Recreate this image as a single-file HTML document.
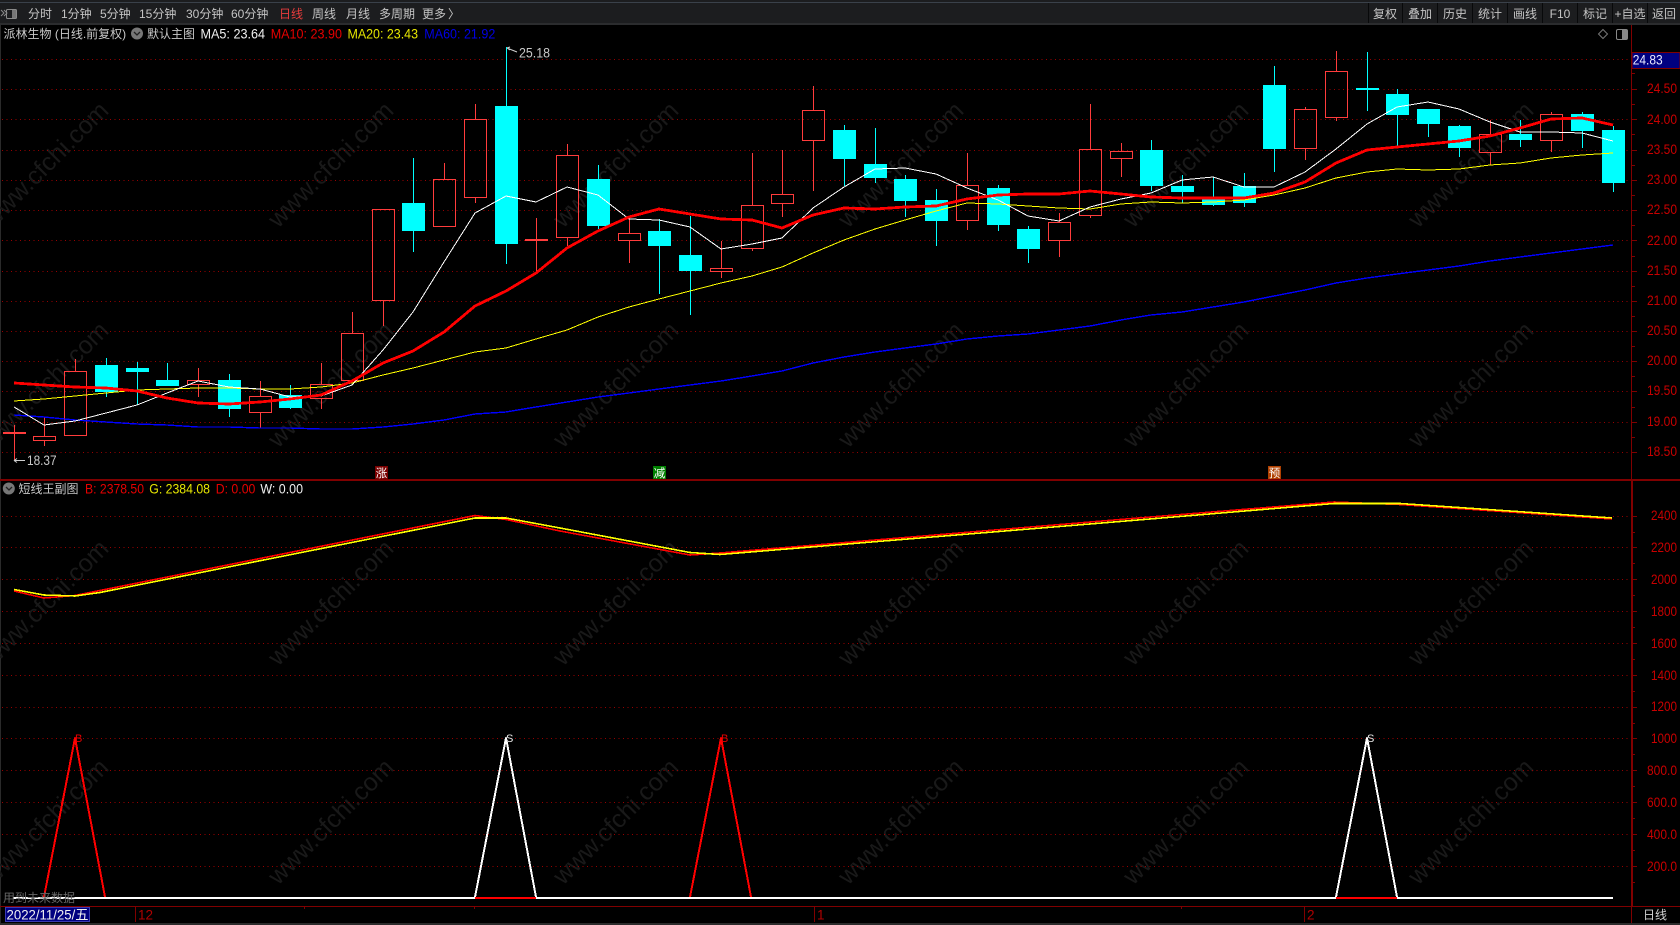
<!DOCTYPE html>
<html><head><meta charset="utf-8"><title>派林生物</title>
<style>
html,body{margin:0;padding:0;background:#000;width:1680px;height:925px;overflow:hidden}
svg{display:block}
text{font-family:"Liberation Sans","Noto Sans CJK SC",sans-serif;font-size:12px}
.tb text{fill:#c4c4c4}
.ax text{fill:#c80000;text-anchor:end;font-size:13.5px}
.wm text{font-size:25px;fill:#191919;text-anchor:end}
.lg text{font-size:13.5px}
</style></head><body>
<svg width="1680" height="925" viewBox="0 0 1680 925" xmlns="http://www.w3.org/2000/svg">
<rect width="1680" height="925" fill="#000"/>
<!-- toolbar -->
<rect width="1680" height="24" fill="#1c1d1f"/>
<rect y="2" width="1680" height="1" fill="#3a414a"/>
<rect y="23" width="1680" height="2" fill="#2b2c2e"/>
<rect x="0" y="25" width="1" height="898" fill="#2a2a2a"/>
<g fill="none" stroke="#8a8a8a"><path d="M1 10l3 3-3 3M4 10l3 3-3 3" /><rect x="6.500" y="9.500" width="10" height="9" rx="1"/></g><rect x="12" y="10" width="4" height="8" fill="#777"/>
<g class="tb">
<text x="28" y="18">分时</text><text x="61" y="18">1分钟</text><text x="100" y="18">5分钟</text><text x="139" y="18">15分钟</text><text x="186" y="18">30分钟</text><text x="231" y="18">60分钟</text>
<text x="279" y="18" style="fill:#e83c3c">日线</text><text x="312" y="18">周线</text><text x="346" y="18">月线</text><text x="379" y="18">多周期</text><text x="422" y="18">更多</text><text x="448" y="18">〉</text>
<g text-anchor="middle"><text x="1385" y="18">复权</text><text x="1420" y="18">叠加</text><text x="1455" y="18">历史</text><text x="1490" y="18">统计</text><text x="1525" y="18">画线</text><text x="1560" y="18">F10</text><text x="1595" y="18">标记</text><text x="1630" y="18">+自选</text><text x="1664" y="18">返回</text></g>
</g>
<path d="M1368.500 3V23M1402.500 3V23M1437.500 3V23M1472.500 3V23M1507.500 3V23M1542.500 3V23M1577.500 3V23M1612.500 3V23M1647.500 3V23" stroke="#08090a" fill="none"/>
<!-- watermark -->
<g class="wm">
<text transform="translate(110,112) rotate(-45)">www.cfchi.com</text><text transform="translate(395,112) rotate(-45)">www.cfchi.com</text><text transform="translate(680,112) rotate(-45)">www.cfchi.com</text><text transform="translate(965,112) rotate(-45)">www.cfchi.com</text><text transform="translate(1250,112) rotate(-45)">www.cfchi.com</text><text transform="translate(1535,112) rotate(-45)">www.cfchi.com</text>
<text transform="translate(110,332) rotate(-45)">www.cfchi.com</text><text transform="translate(395,332) rotate(-45)">www.cfchi.com</text><text transform="translate(680,332) rotate(-45)">www.cfchi.com</text><text transform="translate(965,332) rotate(-45)">www.cfchi.com</text><text transform="translate(1250,332) rotate(-45)">www.cfchi.com</text><text transform="translate(1535,332) rotate(-45)">www.cfchi.com</text>
<text transform="translate(110,550) rotate(-45)">www.cfchi.com</text><text transform="translate(395,550) rotate(-45)">www.cfchi.com</text><text transform="translate(680,550) rotate(-45)">www.cfchi.com</text><text transform="translate(965,550) rotate(-45)">www.cfchi.com</text><text transform="translate(1250,550) rotate(-45)">www.cfchi.com</text><text transform="translate(1535,550) rotate(-45)">www.cfchi.com</text>
<text transform="translate(110,769) rotate(-45)">www.cfchi.com</text><text transform="translate(395,769) rotate(-45)">www.cfchi.com</text><text transform="translate(680,769) rotate(-45)">www.cfchi.com</text><text transform="translate(965,769) rotate(-45)">www.cfchi.com</text><text transform="translate(1250,769) rotate(-45)">www.cfchi.com</text><text transform="translate(1535,769) rotate(-45)">www.cfchi.com</text>
</g>
<!-- grid -->
<path stroke="#980000" stroke-dasharray="1 3.500" fill="none" shape-rendering="crispEdges" d="M2 59.500H1631M2 89.500H1631M2 119.500H1631M2 150.500H1631M2 180.500H1631M2 210.500H1631M2 240.500H1631M2 271.500H1631M2 301.500H1631M2 331.500H1631M2 361.500H1631M2 391.500H1631M2 422.500H1631M2 452.500H1631M2 516.500H1631M2 547.500H1631M2 579.500H1631M2 611.500H1631M2 643.500H1631M2 675.500H1631M2 707.500H1631M2 738.500H1631M2 770.500H1631M2 802.500H1631M2 834.500H1631M2 866.500H1631"/>
<!-- axis + separators -->
<rect y="479" width="1680" height="2" fill="#800000"/>
<path stroke="#800000" fill="none" shape-rendering="crispEdges" d="M0 906.500H1680M1631.500 25V923M1632.500 481V906M1632 89.500H1637M1632 119.500H1637M1632 150.500H1637M1632 180.500H1637M1632 210.500H1637M1632 240.500H1637M1632 271.500H1637M1632 301.500H1637M1632 331.500H1637M1632 361.500H1637M1632 391.500H1637M1632 422.500H1637M1632 452.500H1637M1632 73.500H1635M1632 104.500H1635M1632 134.500H1635M1632 165.500H1635M1632 195.500H1635M1632 225.500H1635M1632 256.500H1635M1632 286.500H1635M1632 316.500H1635M1632 346.500H1635M1632 376.500H1635M1632 407.500H1635M1632 437.500H1635M1632 516.500H1637M1632 547.500H1637M1632 579.500H1637M1632 611.500H1637M1632 643.500H1637M1632 675.500H1637M1632 707.500H1637M1632 738.500H1637M1632 770.500H1637M1632 802.500H1637M1632 834.500H1637M1632 866.500H1637M1632 532.500H1635M1632 563.500H1635M1632 595.500H1635M1632 627.500H1635M1632 659.500H1635M1632 691.500H1635M1632 723.500H1635M1632 754.500H1635M1632 786.500H1635M1632 818.500H1635M1632 850.500H1635M1632 882.500H1635"/>
<g class="ax">
<text x="1677" y="93" textLength="30" lengthAdjust="spacingAndGlyphs">24.50</text><text x="1677" y="124" textLength="30" lengthAdjust="spacingAndGlyphs">24.00</text><text x="1677" y="154" textLength="30" lengthAdjust="spacingAndGlyphs">23.50</text><text x="1677" y="184" textLength="30" lengthAdjust="spacingAndGlyphs">23.00</text><text x="1677" y="214" textLength="30" lengthAdjust="spacingAndGlyphs">22.50</text><text x="1677" y="245" textLength="30" lengthAdjust="spacingAndGlyphs">22.00</text><text x="1677" y="275" textLength="30" lengthAdjust="spacingAndGlyphs">21.50</text><text x="1677" y="305" textLength="30" lengthAdjust="spacingAndGlyphs">21.00</text><text x="1677" y="335" textLength="30" lengthAdjust="spacingAndGlyphs">20.50</text><text x="1677" y="365" textLength="30" lengthAdjust="spacingAndGlyphs">20.00</text><text x="1677" y="395" textLength="30" lengthAdjust="spacingAndGlyphs">19.50</text><text x="1677" y="426" textLength="30" lengthAdjust="spacingAndGlyphs">19.00</text><text x="1677" y="456" textLength="30" lengthAdjust="spacingAndGlyphs">18.50</text>
<text x="1677" y="520" textLength="26" lengthAdjust="spacingAndGlyphs">2400</text><text x="1677" y="552" textLength="26" lengthAdjust="spacingAndGlyphs">2200</text><text x="1677" y="584" textLength="26" lengthAdjust="spacingAndGlyphs">2000</text><text x="1677" y="616" textLength="26" lengthAdjust="spacingAndGlyphs">1800</text><text x="1677" y="648" textLength="26" lengthAdjust="spacingAndGlyphs">1600</text><text x="1677" y="680" textLength="26" lengthAdjust="spacingAndGlyphs">1400</text><text x="1677" y="711" textLength="26" lengthAdjust="spacingAndGlyphs">1200</text><text x="1677" y="743" textLength="26" lengthAdjust="spacingAndGlyphs">1000</text><text x="1677" y="775" textLength="30" lengthAdjust="spacingAndGlyphs">800.0</text><text x="1677" y="807" textLength="30" lengthAdjust="spacingAndGlyphs">600.0</text><text x="1677" y="839" textLength="30" lengthAdjust="spacingAndGlyphs">400.0</text><text x="1677" y="871" textLength="30" lengthAdjust="spacingAndGlyphs">200.0</text>
</g>
<rect x="1632" y="52.500" width="48" height="16" fill="#000080" stroke="#800000"/>
<text x="1632.700" y="64.500" fill="#e8e8ff" style="font-size:13.500px" textLength="30" lengthAdjust="spacingAndGlyphs">24.83</text>
<!-- legend -->
<g fill="none"><path d="M1603 29.500l4.500 4.500-4.500 4.500-4.500-4.500z" stroke="#777"/><rect x="1616.500" y="29.500" width="11" height="10" rx="1.500" stroke="#888"/></g><rect x="1622" y="30" width="5" height="9" fill="#888"/>
<text x="3.500" y="38" fill="#c8c8c8">派林生物 (日线.前复权)</text>
<circle cx="137" cy="33.500" r="6" fill="#777"/><path d="M134 32l3 3 3-3" stroke="#222" fill="none" stroke-width="1.300"/>
<text x="147" y="38" fill="#c8c8c8">默认主图</text>
<g class="lg"><text x="200.500" y="38.300" fill="#f0f0f0" textLength="64.500" lengthAdjust="spacingAndGlyphs">MA5: 23.64</text><text x="270.700" y="38.300" fill="#e60000" textLength="71.300" lengthAdjust="spacingAndGlyphs">MA10: 23.90</text><text x="347.500" y="38.300" fill="#e6e600" textLength="70.500" lengthAdjust="spacingAndGlyphs">MA20: 23.43</text><text x="424.300" y="38.300" fill="#0000e6" textLength="71" lengthAdjust="spacingAndGlyphs">MA60: 21.92</text></g>
<circle cx="8.800" cy="488.500" r="6" fill="#777"/><path d="M6 487l3 3 3-3" stroke="#222" fill="none" stroke-width="1.300"/>
<text x="18.500" y="493" fill="#c8c8c8">短线王副图</text>
<g class="lg"><text x="85" y="493.500" fill="#e60000" textLength="59" lengthAdjust="spacingAndGlyphs">B: 2378.50</text><text x="149.300" y="493.500" fill="#e6e600" textLength="60.700" lengthAdjust="spacingAndGlyphs">G: 2384.08</text><text x="215.700" y="493.500" fill="#e60000" textLength="39.700" lengthAdjust="spacingAndGlyphs">D: 0.00</text><text x="260.400" y="493.500" fill="#f0f0f0" textLength="42.600" lengthAdjust="spacingAndGlyphs">W: 0.00</text></g>
<!-- candles -->
<g shape-rendering="crispEdges">
<path fill="#00ffff" d="M95 365H118V392H95ZM126 368H149V372H126ZM156 380H179V386H156ZM218 380H241V409H218ZM279 395H302V408H279ZM402 203H425V231H402ZM495 106H518V244H495ZM587 179H610V226H587ZM648 231H671V246H648ZM679 255H702V271H679ZM833 130H856V159H833ZM864 164H887V178H864ZM894 179H917V201H894ZM925 200H948V221H925ZM987 188H1010V225H987ZM1017 229H1040V249H1017ZM1140 150H1163V186H1140ZM1171 186H1194V192H1171ZM1202 199H1225V205H1202ZM1233 186H1256V203H1233ZM1263 85H1286V149H1263ZM1356 88H1379V90H1356ZM1386 94H1409V115H1386ZM1417 109H1440V124H1417ZM1448 126H1471V148H1448ZM1509 134H1532V140H1509ZM1571 114H1594V131H1571ZM1602 130H1625V183H1602Z"/>
<path stroke="#00ffff" fill="none" d="M106.500 358V397M137.500 362V405M167.500 363V386M229.500 374V417M290.500 385V409M413.500 158V252M506.500 47V264M598.500 165V229M659.500 219V294M690.500 216V315M844.500 125V186M875.500 128V183M905.500 175V217M936.500 189V246M998.500 185V231M1028.500 226V263M1151.500 140V191M1182.500 175V203M1213.500 177V206M1244.500 173V207M1274.500 66V172M1367.500 52V111M1397.500 89V147M1428.500 109V137M1459.500 125V157M1520.500 120V147M1582.500 112V148M1613.500 126V192"/>
<path stroke="#ff3c3c" fill="none" d="M44.500 417V436.500M44.500 440.500V446M33.500 436.500H55.500V440.500H33.500ZM75.500 359V371.500M64.500 371.500H86.500V435.500H64.500ZM198.500 368V380.500M198.500 384.500V397M187.500 380.500H209.500V384.500H187.500ZM260.500 381V396.500M260.500 412.500V428M249.500 396.500H271.500V412.500H249.500ZM321.500 363V384.500M321.500 398.500V409M310.500 384.500H332.500V398.500H310.500ZM352.500 312V333.500M341.500 333.500H363.500V380.500H341.500ZM383.500 300.500V326M372.500 209.500H394.500V300.500H372.500ZM444.500 163V179.500M433.500 179.500H455.500V226.500H433.500ZM475.500 104V119.500M475.500 197.500V203M464.500 119.500H486.500V197.500H464.500ZM567.500 144V155.500M567.500 237.500V246M556.500 155.500H578.500V237.500H556.500ZM629.500 217V233.500M629.500 240.500V263M618.500 233.500H640.500V240.500H618.500ZM721.500 241V268.500M721.500 271.500V278M710.500 268.500H732.500V271.500H710.500ZM752.500 153V205.500M752.500 248.500V251M741.500 205.500H763.500V248.500H741.500ZM782.500 150V194.500M782.500 203.500V217M771.500 194.500H793.500V203.500H771.500ZM813.500 86V110.500M813.500 140.500V191M802.500 110.500H824.500V140.500H802.500ZM967.500 153V185.500M967.500 220.500V230M956.500 185.500H978.500V220.500H956.500ZM1059.500 213V222.500M1059.500 240.500V257M1048.500 222.500H1070.500V240.500H1048.500ZM1090.500 104V149.500M1090.500 215.500V218M1079.500 149.500H1101.500V215.500H1079.500ZM1121.500 143V151.500M1121.500 158.500V177M1110.500 151.500H1132.500V158.500H1110.500ZM1305.500 107V109.500M1305.500 148.500V160M1294.500 109.500H1316.500V148.500H1294.500ZM1336.500 51V71.500M1336.500 117.500V121M1325.500 71.500H1347.500V117.500H1325.500ZM1490.500 120V134.500M1490.500 152.500V165M1479.500 134.500H1501.500V152.500H1479.500ZM1551.500 112V114.500M1551.500 140.500V152M1540.500 114.500H1562.500V140.500H1540.500ZM14.500 425V460M536.500 218V273"/>
<path fill="#ff3c3c" d="M3 432H26V434H3ZM525 239H548V241H525Z"/>
</g>
<!-- MA lines -->
<g fill="none" shape-rendering="crispEdges" stroke-linejoin="round">
<polyline stroke="#0000ff" stroke-width="1.400" points="14,415 44,417 75,420 106,422 137,424 167,425 198,427 229,427 260,428 290,428 321,429 352,429 383,427 413,424 444,420 475,414 506,412 536,407 567,402 598,397 629,393 659,389 690,385 721,381 752,376 782,371 813,363 844,357 875,352 905,348 936,344 967,339 998,336 1028,334 1059,330 1090,326 1121,320 1151,315 1182,312 1213,307 1244,302 1274,296 1305,290 1336,283 1367,278 1397,274 1428,270 1459,266 1490,261 1520,257 1551,253 1582,249 1613,245"/>
<polyline stroke="#ffff00" stroke-width="1" points="14,401 44,399 75,396 106,393 137,390 167,389 198,388 229,388 260,389 290,389 321,387 352,383 383,375 413,368 444,360 475,352 506,348 536,339 567,330 598,317 629,307 659,299 690,291 721,283 752,276 782,267 813,253 844,240 875,229 905,220 936,211 967,203 998,204 1028,206 1059,208 1090,209 1121,204 1151,202 1182,203 1213,202 1244,200 1274,195 1305,188 1336,178 1367,172 1397,169 1428,170 1459,169 1490,165 1520,163 1551,158 1582,155 1613,153"/>
<polyline stroke="#ffffff" stroke-width="1" points="14,407 44,425 75,421 106,413 137,405 167,393 198,381 229,387 260,389 290,397 321,396 352,385 383,350 413,312 444,262 475,213 506,196 536,202 567,187 598,195 629,219 659,220 690,227 721,249 752,244 782,238 813,208 844,187 875,169 905,168 936,174 967,188 998,200 1028,216 1059,221 1090,207 1121,199 1151,193 1182,180 1213,177 1244,187 1274,187 1305,172 1336,149 1367,124 1397,107 1428,102 1459,109 1490,122 1520,132 1551,132 1582,133 1613,141"/>
<polyline stroke="#ff0000" stroke-width="2.800" points="14,383 44,385 75,387 106,388 137,391 167,398 198,403 229,404 260,402 290,399 321,395 352,381 383,363 413,351 444,332 475,306 506,291 536,273 567,248 598,231 629,217 659,209 690,214 721,219 752,220 782,228 813,215 844,208 875,209 905,207 936,206 967,199 998,195 1028,194 1059,194 1090,191 1121,194 1151,197 1182,198 1213,198 1244,198 1274,193 1305,182 1336,163 1367,150 1397,147 1428,144 1459,141 1490,136 1520,128 1551,119 1582,118 1613,125"/>
<!-- sub lines -->
<polyline stroke="#ff0000" stroke-width="1.600" points="14,591 44,598 75,595.500 475,515.500 506,519.500 560,531 690,555 720,553 1120,519.500 1334,502 1400,504.500 1612,519"/>
<polyline stroke="#ffff00" stroke-width="1.600" points="14,589.500 44,595 75,596 100,592.500 475,518 506,518 560,528 690,552.500 720,554.500 1120,521.500 1334,503.500 1400,503.500 1612,518"/>
<!-- triangles -->
<path stroke="#ffffff" stroke-width="2" d="M13 898H1613"/>
<path stroke="#ff0000" stroke-width="2" d="M475 898H536M1336 898H1397"/>
<polyline stroke="#ff0000" stroke-width="2" points="44,897 75,738 105,897"/>
<polyline stroke="#ff0000" stroke-width="2" points="690,897 721,738 751,897"/>
<polyline stroke="#ffffff" stroke-width="2" points="475,897 506,738 536,897"/>
<polyline stroke="#ffffff" stroke-width="2" points="1336,897 1367,738 1397,897"/>
</g>
<text x="75" y="742" fill="#e60000" style="font-size:11px">B</text>
<text x="721" y="742" fill="#e60000" style="font-size:11px">B</text>
<text x="506" y="742" fill="#e6e6e6" style="font-size:11px">S</text>
<text x="1367" y="742" fill="#e6e6e6" style="font-size:11px">S</text>
<!-- price annotations -->
<path d="M507 48l10 4M507 48l3-1M507 48l3 2" stroke="#cfcfcf" fill="none"/><text x="519" y="57.500" fill="#c8c8c8" style="font-size:13.500px" textLength="31" lengthAdjust="spacingAndGlyphs">25.18</text>
<path d="M14 460.500H25M14 460.500l3-2M14 460.500l3 2" stroke="#cfcfcf" fill="none"/><text x="27" y="465" fill="#c8c8c8" style="font-size:13.500px" textLength="29.600" lengthAdjust="spacingAndGlyphs">18.37</text>
<!-- markers -->
<rect x="375" y="466" width="13" height="13" fill="#7a0000"/><text x="381.500" y="477" text-anchor="middle" fill="#fff" style="font-size:11.500px">涨</text>
<rect x="653" y="466" width="13" height="13" fill="#008000"/><text x="659.500" y="477" text-anchor="middle" fill="#fff" style="font-size:11.500px">减</text>
<rect x="1268" y="466" width="13" height="13" fill="#b04000"/><text x="1274.500" y="477" text-anchor="middle" fill="#fff" style="font-size:11.500px">预</text>
<text x="3" y="902" fill="#666">用到未来数据</text>
<!-- date axis -->
<rect x="5.500" y="907.500" width="84" height="14" fill="#000080" stroke="#3a3ab0"/>
<text x="6.500" y="919.500" fill="#f0f0f0" style="font-size:13.500px" textLength="82" lengthAdjust="spacingAndGlyphs">2022/11/25/五</text>
<path stroke="#800000" fill="none" shape-rendering="crispEdges" d="M135.500 907V922M814.500 907V922M1304.500 907V922M304.500 907V909M474.500 907V909M1181.500 907V909"/>
<text x="138" y="919.500" fill="#b00000" style="font-size:13.500px">12</text>
<text x="817" y="919.500" fill="#b00000" style="font-size:13.500px">1</text>
<text x="1307" y="919.500" fill="#b00000" style="font-size:13.500px">2</text>
<text x="1655" y="919" fill="#d0d0d0" text-anchor="middle">日线</text>
<rect y="923" width="1680" height="2" fill="#2c2c2c"/>
</svg>
</body></html>
